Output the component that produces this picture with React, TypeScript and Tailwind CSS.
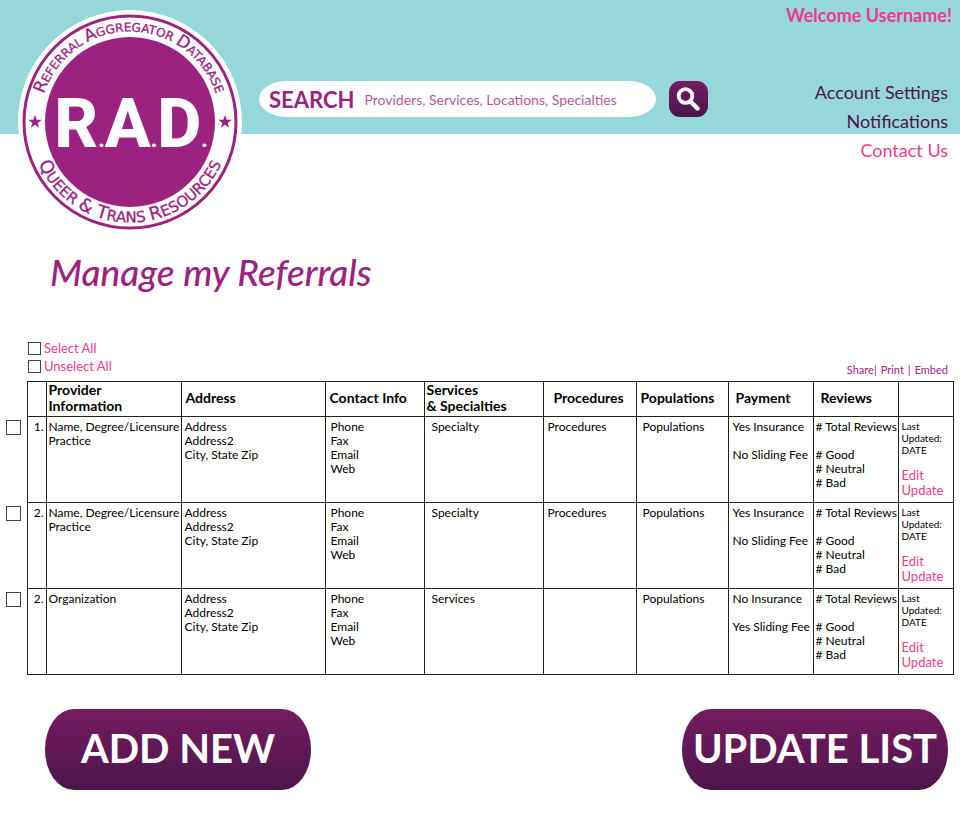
import React from "react";

type Row = {
  id: string;
  no: string;
  provider: string[];
  service: string;
  procedures: string;
  payment: string[];
};

const rows: Row[] = [
  {
    id: "r1",
    no: "1.",
    provider: ["Name, Degree/Licensure", "Practice"],
    service: "Specialty",
    procedures: "Procedures",
    payment: ["Yes Insurance", "No Sliding Fee"],
  },
  {
    id: "r2",
    no: "2.",
    provider: ["Name, Degree/Licensure", "Practice"],
    service: "Specialty",
    procedures: "Procedures",
    payment: ["Yes Insurance", "No Sliding Fee"],
  },
  {
    id: "r3",
    no: "2.",
    provider: ["Organization"],
    service: "Services",
    procedures: "",
    payment: ["No Insurance", "Yes Sliding Fee"],
  },
];

const box =
  "block appearance-none border border-[#444] bg-white checked:bg-[#9b237f]";

function Logo() {
  const star = "0,-7 1.7,-2.2 6.7,-2.2 2.7,0.9 4.1,5.7 0,2.8 -4.1,5.7 -2.7,0.9 -6.7,-2.2 -1.7,-2.2";
  return (
    <svg width="224" height="224" viewBox="0 0 224 224" role="img" aria-label="R.A.D. logo" className="shrink-0">
      <defs>
        <path id="arc-top" d="M 21.500 112 A 90.500 90.500 0 0 1 202.500 112" />
        <path id="arc-bottom" d="M 11.500 112 A 100.500 100.500 0 0 0 212.500 112" />
      </defs>
      <circle cx="112" cy="112" r="112" fill="#fff" />
      <circle cx="112" cy="112" r="106" fill="none" stroke="#9b237f" strokeWidth="3" />
      <circle cx="112" cy="112" r="85" fill="#9b237f" />
      <polygon points={star} fill="#9b237f" transform="translate(17 112)" />
      <polygon points={star} fill="#9b237f" transform="translate(207 112)" />
      <g fill="#9b237f" fontFamily="'DejaVu Sans', sans-serif" stroke="#9b237f" strokeWidth="0.3" textAnchor="middle">
        <text fontSize="12">
          <textPath href="#arc-top" startOffset="50%">
            <tspan fontSize="17">R</tspan>EFERRAL <tspan fontSize="17">A</tspan>GGREGATOR <tspan fontSize="17">D</tspan>ATABASE
          </textPath>
        </text>
        <text fontSize="15">
          <textPath href="#arc-bottom" startOffset="50%">
            <tspan fontSize="18">Q</tspan>UEER <tspan fontSize="18">&amp; T</tspan>RANS <tspan fontSize="18">R</tspan>ESOURCES
          </textPath>
        </text>
      </g>
      <text x="113" y="137" fill="#fff" textAnchor="middle" fontFamily="Roboto, sans-serif" fontWeight="800" fontSize="68">
        R<tspan fontSize="22">.</tspan>A<tspan fontSize="22">.</tspan>D<tspan fontSize="22">.</tspan>
      </text>
    </svg>
  );
}

function Header() {
  return (
    <header className="flex items-start bg-[linear-gradient(#96d7da_134px,transparent_134px)] pl-[18px]">
      <div className="pt-[10px]">
        <Logo />
      </div>
      <form className="ml-[17px] flex flex-1 items-center gap-[13px] pt-[81px]" onSubmit={(e) => e.preventDefault()}>
        <div className="flex h-9 min-w-0 flex-1 items-center gap-[10px] rounded-[28px/18px] bg-white px-[10px]">
          <label htmlFor="search" className="text-[22px] font-bold text-[#9b237f]">
            SEARCH
          </label>
          <input
            id="search"
            type="text"
            placeholder="Providers, Services, Locations, Specialties"
            className="min-w-0 flex-1 bg-transparent text-[14px] text-[#9b237f] outline-none placeholder:text-[#b45aa0]"
          />
        </div>
        <button
          type="submit"
          aria-label="Search"
          className="flex h-9 w-[39px] items-center justify-center rounded-[11px] bg-linear-to-b from-[#761b60] to-[#4c164b]"
        >
          <svg width="25" height="25" viewBox="0 0 25 25" fill="none" stroke="#fff" aria-hidden="true">
            <circle cx="9.500" cy="9" r="6.800" strokeWidth="3.800" />
            <path d="M14.500 14.500 L21.500 21.500" strokeWidth="4.400" strokeLinecap="round" />
          </svg>
        </button>
      </form>
      <div className="flex w-[252px] flex-col items-end">
        <p className="pt-[3px] pr-2 text-[18px] leading-6 font-bold text-[#ee3a93]">Welcome Username!</p>
        <nav className="flex flex-col items-end pt-[51px] pr-3 text-[18px] leading-[29px] text-[#4c164b]">
          <a href="#settings">Account Settings</a>
          <a href="#notifications">Notifications</a>
          <a href="#contact" className="text-[#ee3a93]">
            Contact Us
          </a>
        </nav>
      </div>
    </header>
  );
}

function ReferralTable() {
  return (
    <table className="w-full table-fixed border-collapse text-left text-[12px] leading-[14px] whitespace-nowrap text-black [&_td]:align-top [&_td:not(:first-child)]:border [&_td:not(:first-child)]:border-[#222] [&_th:not(:first-child)]:border [&_th:not(:first-child)]:border-[#222]">
      <colgroup>
        <col className="w-[21px]" />
        <col className="w-[19px]" />
        <col className="w-[135px]" />
        <col className="w-[144px]" />
        <col className="w-[99px]" />
        <col className="w-[119px]" />
        <col className="w-[93px]" />
        <col className="w-[92px]" />
        <col className="w-[85px]" />
        <col className="w-[85px]" />
        <col className="w-[55px]" />
      </colgroup>
      <thead>
        <tr className="h-[35px] text-[14px] [&>th]:pb-[2px] [&>th]:leading-4">
          <th aria-label="Select" />
          <th aria-label="Number" />
          <th className="pl-[2px]">
            Provider
            <br />
            Information
          </th>
          <th className="pl-1">Address</th>
          <th className="pl-1">Contact Info</th>
          <th className="pl-[2px]">
            Services
            <br />
            &amp; Specialties
          </th>
          <th className="pl-[10px]">Procedures</th>
          <th className="pl-1">Populations</th>
          <th className="pl-[7px]">Payment</th>
          <th className="pl-[7px]">Reviews</th>
          <th aria-label="Actions" />
        </tr>
      </thead>
      <tbody>
        {rows.map((row, i) => (
          <tr key={row.id} className="h-[86px] [&>td]:pt-[3px]">
            <td>
              <input type="checkbox" aria-label={"Select row " + (i + 1)} className={box + " size-[15px]"} />
            </td>
            <td className="pr-[2px] text-right">{row.no}</td>
            <td className="pl-[2px]">
              {row.provider.map((line) => (
                <div key={line}>{line}</div>
              ))}
            </td>
            <td className="pl-[3px]">
              <div>Address</div>
              <div>Address2</div>
              <div>City, State Zip</div>
            </td>
            <td className="pl-[5px]">
              <div>Phone</div>
              <div>Fax</div>
              <div>Email</div>
              <div>Web</div>
            </td>
            <td className="pl-[7px]">{row.service}</td>
            <td className="pl-1">{row.procedures}</td>
            <td className="pl-[6px]">Populations</td>
            <td className="pl-1">
              <div>{row.payment[0]}</div>
              <div className="pt-[14px]">{row.payment[1]}</div>
            </td>
            <td className="pl-[2px]">
              <div># Total Reviews</div>
              <div className="pt-[14px]"># Good</div>
              <div># Neutral</div>
              <div># Bad</div>
            </td>
            <td className="pl-[3px]">
              <div className="text-[10px] leading-3">
                Last
                <br />
                Updated:
                <br />
                DATE
              </div>
              <div className="flex flex-col pt-3 text-[13px] leading-[15px] text-[#ee3a93]">
                <a href="#edit">Edit</a>
                <a href="#update">Update</a>
              </div>
            </td>
          </tr>
        ))}
      </tbody>
    </table>
  );
}

const action =
  "h-[81px] w-[266px] rounded-[29px/40px] bg-linear-to-b from-[#761b60] to-[#4c164b] pb-1 text-[40px] font-bold whitespace-nowrap text-white";

export default function App() {
  return (
    <div className="bg-white font-['Lato','Open_Sans',sans-serif]">
      <Header />
      <main>
        <h1 className="pt-2 pl-[50px] text-[37px] leading-[60px] font-medium text-[#9b237f] italic">Manage my Referrals</h1>
        <div className="flex items-end justify-between pt-[37px] pr-3 pb-[6px] pl-7">
          <div className="flex flex-col text-[13px] leading-[18px] text-[#ee3a93]">
            <label className="flex items-center gap-[3px]">
              <input type="checkbox" className={box + " size-[13px]"} />
              Select All
            </label>
            <label className="flex items-center gap-[3px]">
              <input type="checkbox" className={box + " size-[13px]"} />
              Unselect All
            </label>
          </div>
          <div className="flex gap-1 text-[11px] leading-[10px] text-[#9b237f]">
            <span>
              <a href="#share">Share</a>|
            </span>
            <a href="#print">Print</a>
            <span>|</span>
            <a href="#embed">Embed</a>
          </div>
        </div>
        <div className="pr-[7px] pl-[6px]">
          <ReferralTable />
        </div>
        <div className="flex justify-between pt-[34px] pr-3 pb-8 pl-[45px]">
          <button type="button" className={action}>
            ADD NEW
          </button>
          <button type="button" className={action}>
            UPDATE LIST
          </button>
        </div>
      </main>
    </div>
  );
}
